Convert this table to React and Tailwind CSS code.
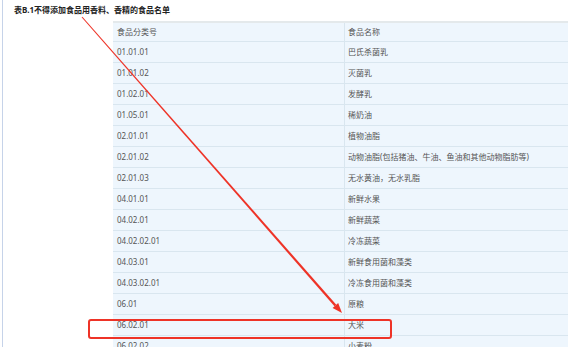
import React from 'react';

const rows = [
  ['01.01.01', '巴氏杀菌乳'],
  ['01.01.02', '灭菌乳'],
  ['01.02.01', '发酵乳'],
  ['01.05.01', '稀奶油'],
  ['02.01.01', '植物油脂'],
  ['02.01.02', '动物油脂(包括猪油、牛油、鱼油和其他动物脂肪等)'],
  ['02.01.03', '无水黄油，无水乳脂'],
  ['04.01.01', '新鲜水果'],
  ['04.02.01', '新鲜蔬菜'],
  ['04.02.02.01', '冷冻蔬菜'],
  ['04.03.01', '新鲜食用菌和藻类'],
  ['04.03.02.01', '冷冻食用菌和藻类'],
  ['06.01', '原粮'],
  ['06.02.01', '大米'],
  ['06.02.02', '小麦粉'],
];

const Row = ({ code, name, header }) => (
  <div
    className={`flex h-[21px] items-center bg-[#eef6fd] border-b border-[#d9e6ef] ${
      header ? 'border-t-2 border-t-[#e4e9eb]' : ''
    }`}
  >
    <div className="w-[232px] h-full flex items-center pl-[4px] border-r border-[#d9e6ef]">{code}</div>
    <div className="flex-1 h-full flex items-center pl-[3px]">{name}</div>
  </div>
);

export default function App() {
  return (
    <div
      className="relative w-[568px] h-[347px] overflow-hidden bg-white text-[#555]"
      style={{ fontFamily: '"Noto Sans", "Noto Sans CJK SC", sans-serif' }}
    >
      <div className="ml-[2px] h-full border-l border-[#c6d3e9]">
        <h1 className="pl-[11px] pt-[4px] h-[21px] text-[8px] font-bold leading-[12px] text-[#222]">
          表B.1不得添加食品用香料、香精的食品名单
        </h1>
        <div className="ml-[110px] w-[480px] text-[8px]">
          <Row code="食品分类号" name="食品名称" header />
          {rows.map(([c, n]) => (
            <Row key={c} code={c} name={n} />
          ))}
        </div>
      </div>

      {/* annotation overlay */}
      <svg className="absolute inset-0 pointer-events-none" width="568" height="347">
        <polygon
          points="81.6,17.3 82.4,16.7 336.3,304.7 334.5,306.3"
          fill="#ee3327"
        />
        <polygon points="342,313 332.6,307.9 338.2,303" fill="#ee3327" />
      </svg>
      <div className="absolute left-[88px] top-[319px] w-[304px] h-[20px] border-2 border-[#ee3327] rounded-[3px]" />
    </div>
  );
}
